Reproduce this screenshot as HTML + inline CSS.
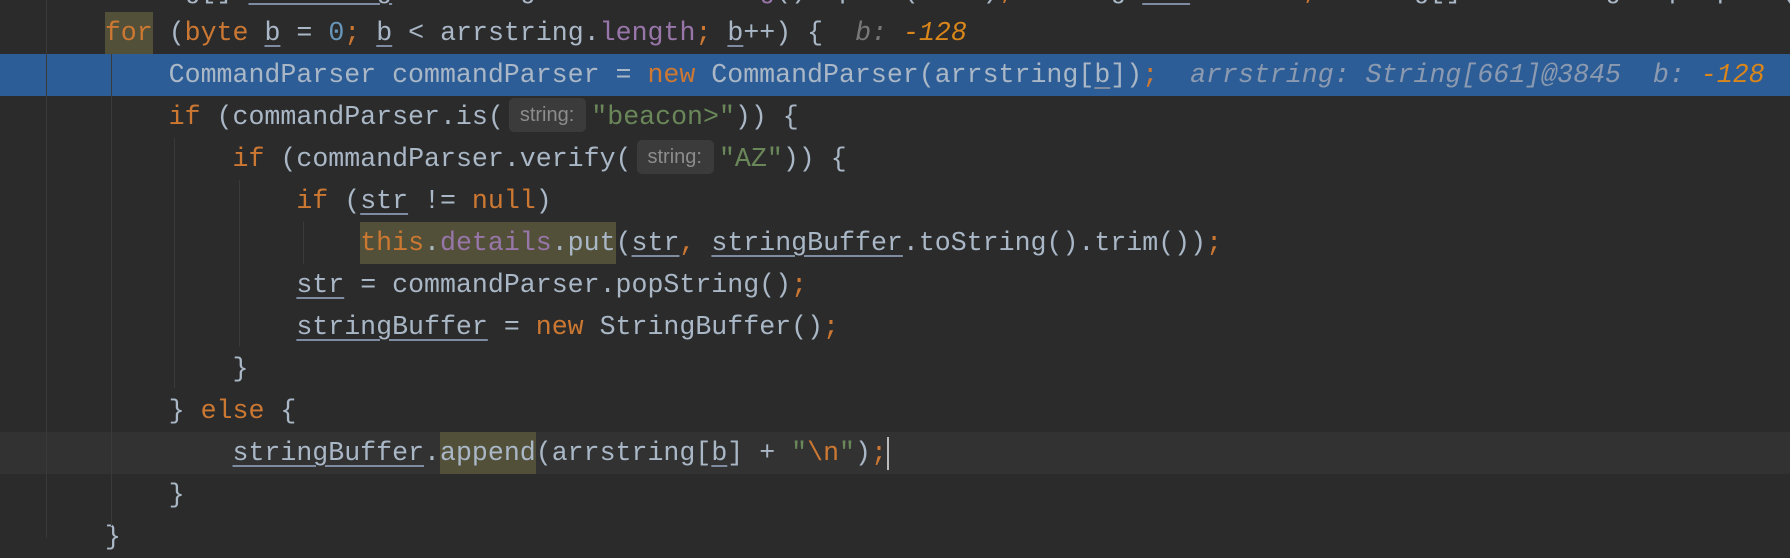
<!DOCTYPE html>
<html><head><meta charset="utf-8"><style>
html,body{margin:0;padding:0;background:#2b2b2b;width:1790px;height:538px;overflow:hidden;}
.l{position:absolute;left:0;width:1790px;height:42px;line-height:42px;font-family:"Liberation Mono",monospace;font-size:26.6px;color:#a9b7c6;white-space:pre;padding-left:41px;box-sizing:border-box;overflow:hidden;}
.k{color:#cc7832}.n{color:#6897bb}.p{color:#9876aa}.s{color:#6a8759}
.u{text-decoration:underline;text-decoration-color:#7e8ba0;text-underline-offset:5px;text-decoration-thickness:2px}
.h{background:#525039;display:inline-block;height:42px}
.hint{display:inline-block;background:#3b3b3b;color:#8c8c8c;font-family:"Liberation Sans",sans-serif;font-size:20px;line-height:34px;height:34px;padding:0 12px 0 11px;border-radius:5px;vertical-align:middle;margin:0 5px 0 5px;position:relative;top:-2px}
.dv{color:#8b9ab0;font-style:italic}.dn{color:#d9861a;font-style:italic}
.g{position:absolute;width:1px;background:#3a3a3a}
</style></head><body>
<div class="l" style="top:-30px;color:#a9b7c6">    String[] <span class="u">arrstring</span> = stringBuffer.<span class="p">toString</span>().split(<span class="s">"\n"</span>)<span class="k">;</span> String <span class="u">str</span> = <span class="k">null;</span> String[] arrstring = p.split(<span class="s">"\n"</span>)<span class="k">;</span></div>
<div class="l" style="top:12px">    <span class="k h">for</span> (<span class="k">byte</span> <span class="u">b</span> = <span class="n">0</span><span class="k">;</span> <span class="u">b</span> &lt; arrstring.<span class="p">length</span><span class="k">;</span> <span class="u">b</span>++) {  <span class="dv" style="color:#787878">b:</span> <span class="dn">-128</span></div>
<div class="l" style="top:54px;background:#2d5d96">        CommandParser commandParser = <span class="k">new</span> CommandParser(arrstring[<span class="u">b</span>])<span class="k">;</span>  <span class="dv">arrstring: String[661]@3845</span>  <span class="dv">b:</span> <span class="dn">-128</span></div>
<div class="l" style="top:96px">        <span class="k">if</span> (commandParser.is(<span class="hint">string:</span><span class="s">"beacon&gt;"</span>)) {</div>
<div class="l" style="top:138px">            <span class="k">if</span> (commandParser.verify(<span class="hint">string:</span><span class="s">"AZ"</span>)) {</div>
<div class="l" style="top:180px">                <span class="k">if</span> (<span class="u">str</span> != <span class="k">null</span>)</div>
<div class="l" style="top:222px">                    <span class="h"><span class="k">this</span>.<span class="p">details</span>.put</span>(<span class="u">str</span><span class="k">,</span> <span class="u">stringBuffer</span>.toString().trim())<span class="k">;</span></div>
<div class="l" style="top:264px">                <span class="u">str</span> = commandParser.popString()<span class="k">;</span></div>
<div class="l" style="top:306px">                <span class="u">stringBuffer</span> = <span class="k">new</span> StringBuffer()<span class="k">;</span></div>
<div class="l" style="top:348px">            }</div>
<div class="l" style="top:390px">        } <span class="k">else</span> {</div>
<div class="l" style="top:432px;background:#323232">            <span class="u">stringBuffer</span>.<span class="h">append</span>(arrstring[<span class="u">b</span>] + <span class="s">"<span class="k">\n</span>"</span>)<span class="k">;</span></div>
<div class="l" style="top:474px">        }</div>
<div class="l" style="top:516px">    }</div>
<div style="position:absolute;left:887px;top:437px;width:2px;height:33px;background:#bbbbbb"></div>
<div class="g" style="left:46px;top:0;height:538px"></div>
<div class="g" style="left:111px;top:54px;height:472px"></div>
<div class="g" style="left:174px;top:138px;height:250px"></div>
<div class="g" style="left:239px;top:180px;height:166px"></div>
<div class="g" style="left:303px;top:222px;height:42px"></div>
</body></html>
